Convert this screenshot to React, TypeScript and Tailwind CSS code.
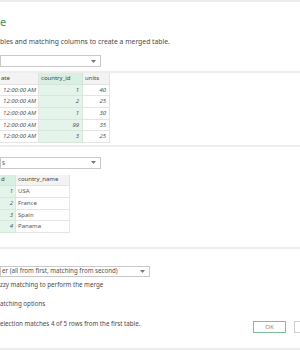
import React from 'react';

const font = { fontFamily: '"Segoe UI", "Noto Sans", "Open Sans", sans-serif' };

const Caret = () => (
  <svg width="5" height="3" viewBox="0 0 5 3" className="shrink-0">
    <path d="M0 0 L5 0 L2.5 3 Z" fill="#777" />
  </svg>
);

const Dropdown: React.FC<{ text?: string; width: string; height: string }> = ({ text, width, height }) => (
  <div className={`${width} ${height} border border-[#c9c9c9] bg-white flex items-center justify-between pl-[1px] pr-[4px]`}>
    <span className="text-[6.2px] text-[#505050] leading-none whitespace-nowrap">{text}</span>
    <Caret />
  </div>
);

const salesRows = [
  { d: '12:00:00 AM', id: '1', u: '40' },
  { d: '12:00:00 AM', id: '2', u: '25' },
  { d: '12:00:00 AM', id: '1', u: '30' },
  { d: '12:00:00 AM', id: '99', u: '35' },
  { d: '12:00:00 AM', id: '3', u: '25' },
];

const countries = [
  { id: '1', name: 'USA' },
  { id: '2', name: 'France' },
  { id: '3', name: 'Spain' },
  { id: '4', name: 'Panama' },
];

const Separator = () => <div className="h-[2px] w-full bg-[#ededed] shrink-0" />;

export default function App() {
  return (
    <div className="w-[300px] h-[350px] bg-white overflow-hidden flex flex-col" style={font}>
      <Separator />

      <div className="mt-[13px] h-[14px] text-[11px] leading-[14px] text-[#3f8f5e]">e</div>
      <div className="mt-[7px] h-[11px] text-[6.8px] leading-[11px] text-[#4a4a4a] whitespace-nowrap">
        bles and matching columns to create a merged table.
      </div>

      <div className="mt-[8px]">
        <Dropdown width="w-[101px]" height="h-[12px]" />
      </div>

      <div className="mt-[4px]">
        <Separator />
      </div>

      {/* first table */}
      <div className="grid grid-cols-[39px_44px_27px] w-[110px] text-[6px] text-[#555]">
        <div className="h-[11.7px] bg-[#f3f3f3] border-r border-b border-[#e2e2e2] flex items-center pl-[1px] text-[#444]">ate</div>
        <div className="h-[11.7px] bg-[#d9efe1] border-r border-b border-[#d3e6d9] flex items-center pl-[2px] text-[#444]">country_id</div>
        <div className="h-[11.7px] bg-[#f3f3f3] border-r border-b border-[#e2e2e2] flex items-center pl-[2px] text-[#444]">units</div>
        {salesRows.map((r, i) => (
          <React.Fragment key={i}>
            <div className="h-[11.7px] border-r border-b border-[#e4e4e4] flex items-center justify-end pr-[2px] italic">{r.d}</div>
            <div className="h-[11.7px] bg-[#e4f4ea] border-r border-b border-[#d6e9dc] flex items-center justify-end pr-[3px] italic">{r.id}</div>
            <div className="h-[11.7px] border-r border-b border-[#e4e4e4] flex items-center justify-end pr-[3px] italic">{r.u}</div>
          </React.Fragment>
        ))}
      </div>

      <div className="mt-[1.5px]">
        <Separator />
      </div>

      <div className="mt-[10px]">
        <Dropdown text="s" width="w-[101px]" height="h-[12px]" />
      </div>

      {/* second table */}
      <div className="mt-[6px] grid grid-cols-[16px_54px] w-[70px] text-[6px] text-[#555]">
        <div className="h-[11.7px] bg-[#d9efe1] border-r border-b border-[#d3e6d9] flex items-center pl-[1px] text-[#444]">d</div>
        <div className="h-[11.7px] bg-[#f3f3f3] border-r border-b border-[#e2e2e2] flex items-center pl-[2px] text-[#444]">country_name</div>
        {countries.map((c) => (
          <React.Fragment key={c.id}>
            <div className="h-[11.7px] bg-[#e4f4ea] border-r border-b border-[#d6e9dc] flex items-center justify-end pr-[2px] italic">{c.id}</div>
            <div className="h-[11.7px] border-r border-b border-[#e4e4e4] flex items-center pl-[2px]">{c.name}</div>
          </React.Fragment>
        ))}
      </div>

      <div className="mt-[13.5px]">
        <Separator />
      </div>

      <div className="mt-[17px]">
        <Dropdown text="er (all from first, matching from second)" width="w-[150px]" height="h-[11px]" />
      </div>
      <div className="mt-[2px] h-[11px] leading-[11px] text-[6.2px] text-[#4a4a4a] whitespace-nowrap">
        zzy matching to perform the merge
      </div>
      <div className="mt-[8px] h-[11px] leading-[11px] text-[6.2px] text-[#4a4a4a] whitespace-nowrap">
        atching options
      </div>

      <div className="mt-[9.5px] w-[327px] flex items-start">
        <div className="flex-1 h-[11px] leading-[11px] text-[6.2px] text-[#4a4a4a] whitespace-nowrap">
          election matches 4 of 5 rows from the first table.
        </div>
        <div className="mt-[2.5px] flex gap-[8px]">
          <button className="w-[33px] h-[12px] border border-[#7fbf98] bg-white text-[6px] text-[#888] leading-none flex items-center justify-center">
            OK
          </button>
          <button aria-label="Cancel" className="w-[33px] h-[12px] border border-[#cfcfcf] bg-white" />
        </div>
      </div>

      <div className="mt-[15px]">
        <Separator />
      </div>
    </div>
  );
}
